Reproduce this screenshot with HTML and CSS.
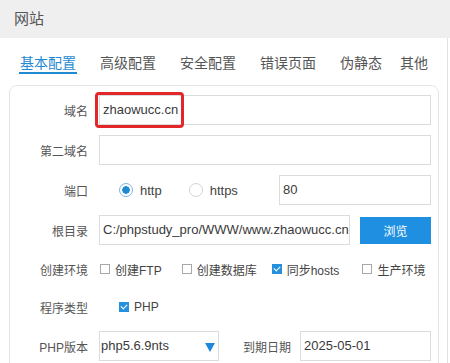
FILE: index.html
```html
<!DOCTYPE html>
<html lang="zh-CN">
<head>
  <meta charset="UTF-8" />
  <title>网站</title>
  <link rel="stylesheet" href="styles.css">
</head>
<body>
  <div class="titlebar">网站</div>
  <div class="content">
    <div class="tabs">
      <span class="tab active">基本配置</span>
      <span class="tab">高级配置</span>
      <span class="tab">安全配置</span>
      <span class="tab">错误页面</span>
      <span class="tab">伪静态</span>
      <span class="tab last">其他</span>
    </div>

    <div class="panel">
      <div class="row">
        <label class="label">域名</label>
        <div class="field highlight-wrap">
          <div class="input wide">zhaowucc.cn</div>
          <div class="highlight"></div>
        </div>
      </div>

      <div class="row">
        <label class="label">第二域名</label>
        <div class="input wide"></div>
      </div>

      <div class="row">
        <label class="label">端口</label>
        <div class="radios">
          <span class="radio checked"></span><span class="opt">http</span>
          <span class="radio"></span><span class="opt">https</span>
        </div>
        <div class="input port">80</div>
      </div>

      <div class="row">
        <label class="label">根目录</label>
        <div class="input root">C:/phpstudy_pro/WWW/www.zhaowucc.cn</div>
        <button class="btn">浏览</button>
      </div>

      <div class="row short">
        <label class="label">创建环境</label>
        <div class="checks env">
          <span class="check"></span><span class="opt c1">创建FTP</span>
          <span class="check"></span><span class="opt c2">创建数据库</span>
          <span class="check on"></span><span class="opt c3">同步hosts</span>
          <span class="check"></span><span class="opt">生产环境</span>
        </div>
      </div>

      <div class="row short">
        <label class="label">程序类型</label>
        <div class="checks indent">
          <span class="check on"></span><span class="opt">PHP</span>
        </div>
      </div>

      <div class="row">
        <label class="label">PHP版本</label>
        <div class="input select">php5.6.9nts<span class="arrow"></span></div>
        <label class="label date-label">到期日期</label>
        <div class="input date">2025-05-01</div>
      </div>
    </div>
  </div>
</body>
</html>
```

FILE: styles.css
```css
body {
  margin: 0;
  font-family: "Liberation Sans", "Noto Sans CJK SC", sans-serif;
  font-size: 12px;
  color: #555;
  background: #fff;
  overflow: hidden;
  white-space: nowrap;
}

.titlebar {
  height: 38px;
  line-height: 38px;
  padding-left: 14px;
  background: #efefef;
  font-size: 15px;
  color: #555;
}

.content {
  width: 447px;
  height: 325px;
  border-right: 1px solid #e2e2e2;
}

.tabs {
  display: flex;
  gap: 22px;
  padding: 16px 0 0 19px;
}

.tab {
  font-size: 14px;
  line-height: 18px;
  padding: 0 1px;
  color: #555;
  border-bottom: 2px solid transparent;
}

.tab.active {
  color: #1f8ad2;
  border-bottom-color: #1f8ad2;
}

.tab.last {
  margin-left: -6px;
}

.panel {
  margin: 11px 0 0 9px;
  width: 430px;
  height: 300px;
  box-sizing: border-box;
  border: 1px solid #e4e4e4;
  border-radius: 8px;
  padding-top: 9px;
}

.row {
  display: flex;
  align-items: center;
  height: 30px;
  margin-bottom: 10px;
}

.row > * {
  flex-shrink: 0;
}

.row.short {
  height: 28px;
}

.label {
  width: 78px;
  margin-right: 11px;
  text-align: right;
  color: #555;
}

.input {
  box-sizing: border-box;
  height: 30px;
  line-height: 28px;
  border: 1px solid #dcdcdc;
  padding: 0 3px;
  font-size: 13px;
  color: #3a3a3a;
  overflow: hidden;
}

.wide {
  width: 332px;
}

.highlight-wrap {
  position: relative;
}

.highlight {
  position: absolute;
  left: -4px;
  top: -3px;
  width: 89px;
  height: 36px;
  box-sizing: border-box;
  border: 3px solid #e2262a;
  border-radius: 4px;
}

.radios {
  display: flex;
  align-items: center;
  width: 180px;
  padding-left: 20px;
  box-sizing: border-box;
}

.radio {
  width: 14px;
  height: 14px;
  box-sizing: border-box;
  border: 1px solid #d4d4d4;
  border-radius: 50%;
  margin-right: 7px;
}

.radio.checked {
  border-color: #7ab8e6;
  background: radial-gradient(circle, #1f8ad2 0 3.5px, #fff 4px);
}

.radios .opt {
  font-size: 13px;
  color: #444;
  margin-right: 27px;
}

.port {
  width: 152px;
}

.root {
  width: 251px;
}

.btn {
  margin-left: 10px;
  width: 71px;
  height: 27px;
  border: none;
  background: #1e8fe1;
  color: #fff;
  font-family: inherit;
  font-size: 12px;
}

.checks {
  display: flex;
  align-items: center;
}

.checks > * {
  flex-shrink: 0;
}

.checks.env {
  padding-left: 1px;
}

.checks.indent {
  padding-left: 20px;
}

.check {
  width: 10px;
  height: 10px;
  box-sizing: border-box;
  border: 1px solid #a8a8a8;
  margin-right: 5px;
}

.check.on {
  border: none;
  background: #2591dc;
  position: relative;
}

.check.on::after {
  content: "";
  position: absolute;
  left: 3px;
  top: 1px;
  width: 3px;
  height: 5px;
  border: solid #fff;
  border-width: 0 1.5px 1.5px 0;
  transform: rotate(45deg);
}

.checks .opt {
  font-size: 12px;
  color: #444;
  margin-right: 20px;
}

.opt.c1 {
  margin-right: 20px;
}

.opt.c2 {
  margin-right: 15px;
}

.opt.c3 {
  margin-right: 23px;
}

.select {
  width: 120px;
  position: relative;
  padding-left: 1px;
}

.arrow {
  position: absolute;
  right: 3px;
  top: 11px;
  width: 0;
  height: 0;
  border-left: 5.5px solid transparent;
  border-right: 5.5px solid transparent;
  border-top: 9px solid #1e88dc;
}

.date-label {
  width: 60px;
  margin-left: 12px;
  margin-right: 9px;
}

.date {
  width: 131px;
}
```
